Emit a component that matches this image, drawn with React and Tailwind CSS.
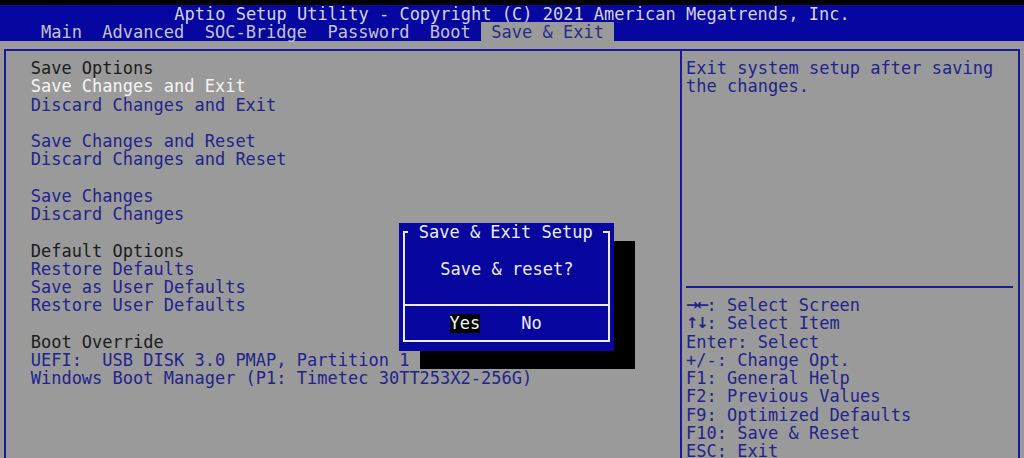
import React from "react";

const NAVY = "text-[#23238c]";

const leftLines = [
  { t: "Save Options", c: "text-[#1c1c1c]" },
  { t: "Save Changes and Exit", c: "text-[#f4f4f4]" },
  { t: "Discard Changes and Exit", c: NAVY },
  null,
  { t: "Save Changes and Reset", c: NAVY },
  { t: "Discard Changes and Reset", c: NAVY },
  null,
  { t: "Save Changes", c: NAVY },
  { t: "Discard Changes", c: NAVY },
  null,
  { t: "Default Options", c: "text-[#1c1c1c]" },
  { t: "Restore Defaults", c: NAVY },
  { t: "Save as User Defaults", c: NAVY },
  { t: "Restore User Defaults", c: NAVY },
  null,
  { t: "Boot Override", c: "text-[#1c1c1c]" },
  { t: "UEFI:  USB DISK 3.0 PMAP, Partition 1", c: NAVY },
  { t: "Windows Boot Manager (P1: Timetec 30TT253X2-256G)", c: NAVY },
];

const helpKeys = [
  { k: ["→", "←"], t: ": Select Screen" },
  { k: ["↑", "↓"], t: ": Select Item" },
  { k: null, t: "Enter: Select" },
  { k: null, t: "+/-: Change Opt." },
  { k: null, t: "F1: General Help" },
  { k: null, t: "F2: Previous Values" },
  { k: null, t: "F9: Optimized Defaults" },
  { k: null, t: "F10: Save & Reset" },
  { k: null, t: "ESC: Exit" },
];

function Line({ children, className = "" }) {
  return (
    <div className={`h-[18.24px] leading-[18.24px] whitespace-pre ${className}`}>
      {children}
    </div>
  );
}

function Arrow({ children }) {
  return (
    <span className="inline-block w-[10.24px] text-center font-bold font-['DejaVu_Sans',sans-serif] text-[15px] leading-[18.24px] align-top">
      {children}
    </span>
  );
}

export default function App() {
  return (
    <div className="relative w-[1024px] h-[458px] overflow-hidden flex flex-col bg-[#9a9a9a] font-['DejaVu_Sans_Mono',monospace] text-[17px]">
      {/* top strip */}
      <div className="h-[5px] bg-black shrink-0" />

      {/* Header */}
      <div className="bg-[#0606a0] shrink-0">
        <Line className="text-center text-[#d4d4e2]">
          Aptio Setup Utility - Copyright (C) 2021 American Megatrends, Inc.
        </Line>
        <Line className="text-[#c4c4d0]">
          {"    Main  Advanced  SOC-Bridge  Password  Boot "}
          <span className="bg-[#9a9a9a] text-[#2a2a88]">{" Save & Exit "}</span>
        </Line>
      </div>

      {/* Body frame */}
      <div className="flex-1 pt-[7.1px] px-[4px] min-h-0">
        <div className="h-full flex border-t-2 border-l-2 border-r-2 border-[#1a1a94]">
          {/* Left panel */}
          <div className="w-[674px] pl-[24.7px] pt-[8.6px]">
            {leftLines.map((l, i) =>
              l ? (
                <Line key={i} className={l.c}>
                  {l.t}
                </Line>
              ) : (
                <Line key={i} />
              )
            )}
          </div>

          {/* Right panel */}
          <div className="flex-1 border-l-2 border-[#1a1a94] pt-[8.6px]">
            <div className="h-[226.5px] pl-[4.1px] text-[#23238c]">
              <Line>Exit system setup after saving</Line>
              <Line>the changes.</Line>
            </div>
            <div className="h-[2px] ml-[4px] mr-[5px] bg-[#1a1a94]" />
            <div className="pt-[8.6px] pl-[4.1px] text-[#23238c]">
              {helpKeys.map((h) => (
                <Line key={h.t}>
                  {h.k && (
                    <>
                      <Arrow>{h.k[0]}</Arrow>
                      <Arrow>{h.k[1]}</Arrow>
                    </>
                  )}
                  {h.t}
                </Line>
              ))}
            </div>
          </div>
        </div>
      </div>

      {/* Dialog shadow */}
      <div className="absolute left-[419.8px] top-[241.1px] w-[215px] h-[127.7px] bg-black" />

      {/* Dialog */}
      <div className="absolute left-[399.4px] top-[222.9px] w-[215px] h-[127.7px] bg-[#0707a0] px-[4.1px] pt-[8.1px]">
        <div className="relative border-2 border-[#ececf4] h-[111px] flex flex-col">
          <div className="absolute -top-[9.8px] left-[3px] px-[10.24px] bg-[#0707a0] text-[#ececf4]">
            <Line>Save &amp; Exit Setup</Line>
          </div>
          <div className="pt-[26.9px]">
            <Line className="text-center text-[#ececf4]">Save &amp; reset?</Line>
          </div>
          <div className="mt-[25.9px] h-[2px] bg-[#ececf4]" />
          <div className="pt-[8.4px] pl-[44.1px] flex">
            <Line className="bg-black text-[#f4f4f4]">Yes</Line>
            <Line className="text-[#ececf4]">{"    No"}</Line>
          </div>
        </div>
      </div>
    </div>
  );
}
